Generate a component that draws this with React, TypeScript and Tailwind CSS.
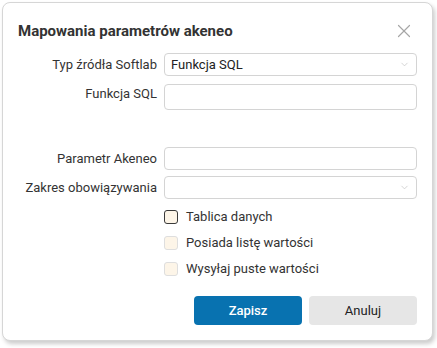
import { X, ChevronDown } from 'lucide-react';

const font = { fontFamily: 'Roboto, "Liberation Sans", sans-serif' };

function Label({ children, className = '' }: { children: React.ReactNode; className?: string }) {
  return (
    <span className={`w-[139px] shrink-0 text-right text-[13px] leading-[16px] text-[#333] ${className}`}>
      {children}
    </span>
  );
}

function SelectBox({ value }: { value?: string }) {
  return (
    <div className="flex h-[23px] flex-1 items-center justify-between rounded-[4px] border border-[#d4d4d4] bg-white pl-[6px] pr-[6px]">
      <span className="text-[13px] text-[#222]">{value}</span>
      <ChevronDown className="h-[11px] w-[11px] text-[#c2c2c2]" strokeWidth={1.5} />
    </div>
  );
}

function CheckRow({ label, active }: { label: string; active?: boolean }) {
  return (
    <div className="flex items-center gap-[8px] pl-[146px]">
      <span
        className={
          active
            ? 'h-[14px] w-[14px] rounded-[3px] border border-[#3a3a3a] bg-[#fdf5e8]'
            : 'h-[14px] w-[14px] rounded-[3px] border border-[#dedede] bg-[#fdf5e8]'
        }
      />
      <span className="text-[13px] leading-[16px] text-[#333]">{label}</span>
    </div>
  );
}

export default function App() {
  return (
    <div className="h-[348px] w-[437px] bg-white" style={font}>
      <div className="ml-[2px] mt-[2px] flex h-[339px] w-[431px] flex-col rounded-[8px] border border-[#d6d6d6] bg-white shadow-[2px_3px_4px_rgba(0,0,0,0.2)]">
        <div className="flex items-start justify-between pl-[15px] pr-[16px] pt-[18px]">
          <h2 className="text-[15px] font-bold leading-[20px] text-[#333]">
            Mapowania parametrów akeneo
          </h2>
          <X className="mr-[1px] mt-[-1px] h-[22px] w-[22px] text-[#a6a6a6]" strokeWidth={1.3} />
        </div>

        <div className="mt-[11px] flex flex-col pl-[15px] pr-[15px]">
          <div className="flex items-center gap-[7px]">
            <Label>Typ źródła Softlab</Label>
            <SelectBox value="Funkcja SQL" />
          </div>
          <div className="mt-[8px] flex items-start gap-[7px]">
            <Label className="pt-[2px]">Funkcja SQL</Label>
            <div className="h-[26px] flex-1 rounded-[4px] border border-[#d4d4d4] bg-white" />
          </div>
          <div className="mt-[37px] flex items-center gap-[7px]">
            <Label>Parametr Akeneo</Label>
            <div className="h-[23px] flex-1 rounded-[4px] border border-[#d4d4d4] bg-white" />
          </div>
          <div className="mt-[6px] flex items-center gap-[7px]">
            <Label>Zakres obowiązywania</Label>
            <SelectBox />
          </div>
          <div className="mt-[10px] flex flex-col gap-[10px]">
            <CheckRow label="Tablica danych" active />
            <CheckRow label="Posiada listę wartości" />
            <CheckRow label="Wysyłaj puste wartości" />
          </div>
          <div className="mt-[19px] flex justify-end gap-[7px]">
            <button className="h-[29px] w-[108px] rounded-[4px] bg-[#0872b0] text-[13px] font-medium text-white">
              Zapisz
            </button>
            <button className="h-[29px] w-[108px] rounded-[4px] bg-[#e6e6e6] text-[13px] text-[#222]">
              Anuluj
            </button>
          </div>
        </div>
      </div>
    </div>
  );
}
